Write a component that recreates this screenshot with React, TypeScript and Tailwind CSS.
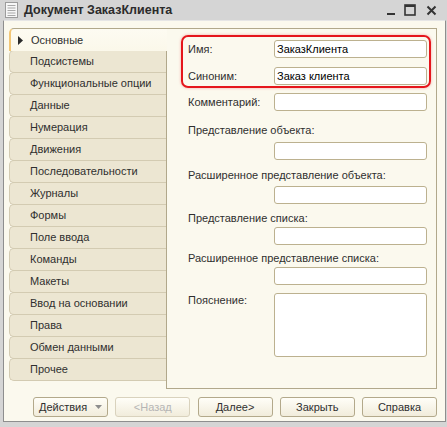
import React from "react";

const TABS = [
  "Основные",
  "Подсистемы",
  "Функциональные опции",
  "Данные",
  "Нумерация",
  "Движения",
  "Последовательности",
  "Журналы",
  "Формы",
  "Поле ввода",
  "Команды",
  "Макеты",
  "Ввод на основании",
  "Права",
  "Обмен данными",
  "Прочее",
];

function DocIcon() {
  return (
    <svg width="13" height="16" viewBox="0 0 13 16" className="shrink-0">
      <rect x="0.5" y="0.5" width="12" height="15" fill="#f7f7f7" stroke="#9c9c9c" />
      {[3.5, 6, 8.5, 11, 13.5].map((y) => (
        <line key={y} x1="2.5" x2="10.5" y1={y} y2={y} stroke="#a8a8a8" strokeWidth="1" />
      ))}
    </svg>
  );
}

function WinControls() {
  return (
    <div className="flex items-center">
      <svg width="10" height="12" viewBox="0 0 10 12" className="mr-[8px]">
        <rect x="1" y="9" width="8" height="2" fill="#333" />
      </svg>
      <svg width="12" height="12" viewBox="0 0 12 12" className="mr-[10px]">
        <rect x="1" y="1" width="10" height="10" fill="none" stroke="#333" strokeWidth="1.6" />
        <rect x="1" y="1" width="10" height="2" fill="#333" />
      </svg>
      <svg width="11" height="11" viewBox="0 0 11 11">
        <path d="M1.5 1.5 L9.5 9.5 M9.5 1.5 L1.5 9.5" stroke="#333" strokeWidth="2" />
      </svg>
    </div>
  );
}

function Field({ value = "", className = "" }: { value?: string; className?: string }) {
  return (
    <div
      className={`h-[18px] w-[153px] shrink-0 rounded-[3px] border border-[#bcb18f] bg-white px-[2px] text-[11px] leading-[16px] text-black ${className}`}
    >
      {value}
    </div>
  );
}

function Btn({ children, disabled, menu }: { children: React.ReactNode; disabled?: boolean; menu?: boolean }) {
  return (
    <div
      className={`flex h-[20px] w-[75px] items-center rounded-[3px] border bg-gradient-to-b from-[#fffef8] to-[#f1ecdb] text-[11px] ${
        disabled ? "border-[#d9d2bd] text-[#b5b5b5]" : "border-[#b3a98b] text-[#2f2f2f]"
      } ${menu ? "justify-between pl-[5px] pr-[5px]" : "justify-center"}`}
    >
      <span>{children}</span>
      {menu && (
        <svg width="7" height="4" viewBox="0 0 7 4">
          <path d="M0 0 H7 L3.5 4 Z" fill="#8d8d8d" />
        </svg>
      )}
    </div>
  );
}

export default function App() {
  return (
    <div className="flex h-[427px] w-[447px] flex-col bg-[#d5d5d5] font-['Liberation_Sans',Arial,sans-serif] text-[#2f2f2f]">
      {/* title bar */}
      <div className="flex h-[20px] shrink-0 items-center pl-[5px] pr-[10px]">
        <DocIcon />
        <span className="ml-[6px] text-[12.5px] font-bold text-[#2b2b2b]">Документ ЗаказКлиента</span>
        <div className="ml-auto">
          <WinControls />
        </div>
      </div>

      {/* body */}
      <div className="ml-[3px] mr-[1px] flex h-[402px] flex-col border border-[#8e8e8e] border-t-[#e6e6e6] bg-[#fbf9ee] pl-[5px] pr-[8px] pt-[7px]">
        <div className="flex h-[361px]">
          {/* tabs */}
          <div className="flex w-[158px] flex-col border-r border-[#b1a88b]">
            {TABS.map((t, i) =>
              i === 0 ? (
                <div
                  key={t}
                  className="relative z-10 -mr-px flex h-[23px] items-center rounded-tl-[5px] border-t border-l-2 border-t-[#b1a88b] border-l-[#f2c676] bg-gradient-to-b from-[#fdfbf2] to-[#fbf8ea] pl-[7px] text-[11px]"
                >
                  <svg width="5" height="9" viewBox="0 0 5 9" className="mr-[8px]">
                    <path d="M0 0 L5 4.5 L0 9 Z" fill="#2a2a2a" />
                  </svg>
                  {t}
                </div>
              ) : (
                <div
                  key={t}
                  className="-mt-px flex h-[23px] items-center rounded-l-[5px] border border-r-0 border-[#d3cbb2] bg-[#ece6d2] pl-[20px] text-[11px]"
                >
                  {t}
                </div>
              )
            )}
          </div>

          {/* panel */}
          <div className="flex w-[270px] flex-col border-y border-r border-[#b1a88b] pt-[6px] text-[11px]">
            <div className="ml-[14px] mr-[5px] rounded-[7px] border-2 border-[#e5161c] pb-[1px] pl-[5px] pr-[2px] pt-[3px] shadow-[0_0_3px_rgba(230,20,30,0.35)]">
              <div className="flex items-center justify-between">
                <span>Имя:</span>
                <Field value="ЗаказКлиента" />
              </div>
              <div className="mt-[9px] flex items-center justify-between">
                <span>Синоним:</span>
                <Field value="Заказ клиента" />
              </div>
            </div>

            <div className="flex flex-col pl-[21px] pr-[9px]">
              <div className="mt-[5px] flex items-center justify-between">
                <span>Комментарий:</span>
                <Field />
              </div>

              <span className="mt-[13px] leading-[13px]">Представление объекта:</span>
              <Field className="ml-auto mt-[5px]" />

              <span className="mt-[9px] leading-[13px]">Расширенное представление объекта:</span>
              <Field className="ml-auto mt-[4px]" />

              <span className="mt-[8px] leading-[13px]">Представление списка:</span>
              <Field className="ml-auto mt-[2px]" />

              <span className="mt-[7px] leading-[13px]">Расширенное представление списка:</span>
              <Field className="ml-auto mt-[2px]" />

              <div className="mt-[8px] flex items-start justify-between">
                <span className="mt-[1px] leading-[13px]">Пояснение:</span>
                <div className="h-[64px] w-[153px] rounded-[3px] border border-[#bcb18f] bg-white" />
              </div>
            </div>
          </div>
        </div>

        {/* buttons */}
        <div className="mt-[8px] flex gap-[7.25px] pl-[24px]">
          <Btn menu>Действия</Btn>
          <Btn disabled>&lt;Назад</Btn>
          <Btn>Далее&gt;</Btn>
          <Btn>Закрыть</Btn>
          <Btn>Справка</Btn>
        </div>
      </div>
    </div>
  );
}
